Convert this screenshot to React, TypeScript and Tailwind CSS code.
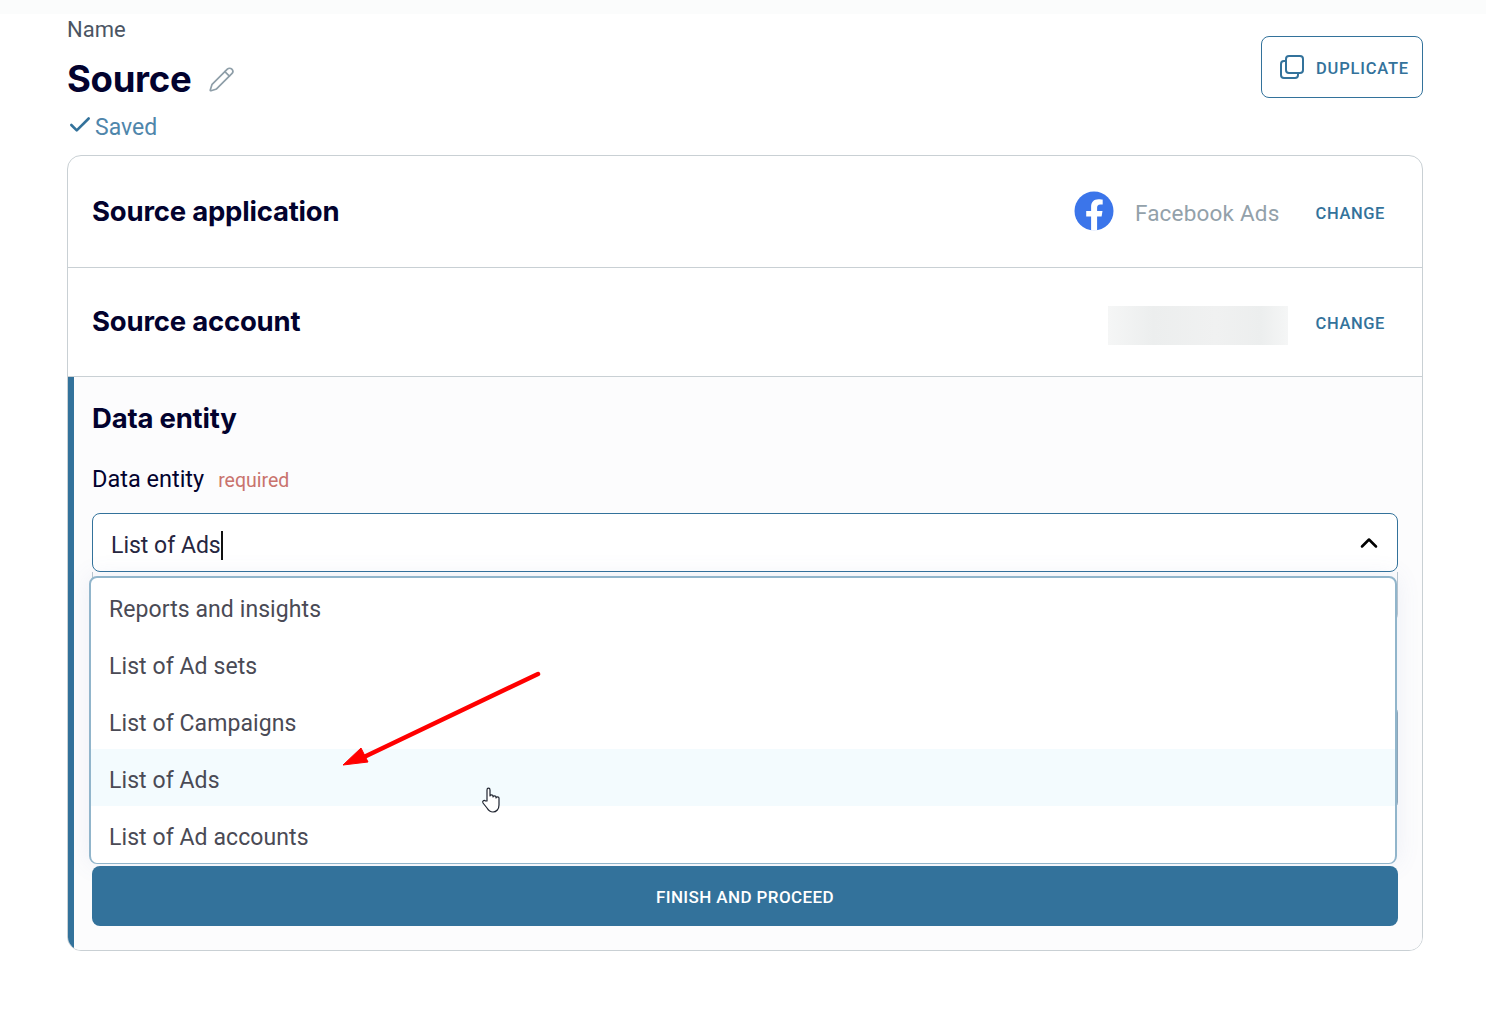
import { Check, ChevronUp, Pencil } from "lucide-react";

const options = ["Reports and insights", "List of Ad sets", "List of Campaigns", "List of Ads", "List of Ad accounts"];

function FacebookLogo() {
  return (
    <svg viewBox="0 0 40 40" className="h-[40px] w-[40px] -translate-y-[4px]">
      <circle cx="20" cy="20" r="19.5" fill="#3b75ea" />
      <path
        d="M27.6 25.600 28.500 20h-5.400v-3.600c0-1.500.8-3 3.200-3h2.400V8.700s-2.200-.4-4.300-.4c-4.400 0-7.300 2.700-7.300 7.500V20h-4.900v5.600h4.900v13.900a19.600 19.600 0 0 0 6 0V25.600z"
        fill="#fff"
      />
    </svg>
  );
}

function DuplicateIcon() {
  return (
    <svg viewBox="0 0 24 24" className="h-[24px] w-[24px]" fill="none" stroke="#33729b" strokeWidth="2" strokeLinejoin="round">
      <rect x="6" y="1" width="17" height="17" rx="3" />
      <path d="M6 6H4a3 3 0 0 0-3 3v11a3 3 0 0 0 3 3h11a3 3 0 0 0 3-3v-2" />
    </svg>
  );
}

function SourceRow({ title, rightClass, children }: { title: string; rightClass: string; children: React.ReactNode }) {
  return (
    <div className="flex items-center justify-between pl-6 pr-[37px]">
      <h2 className="font-['Inter',sans-serif] text-[27.5px] font-bold tracking-[-0.2px] text-[#02022e]">{title}</h2>
      <div className={`flex items-center ${rightClass}`}>
        {children}
        <button className="text-[16.5px] font-medium tracking-[0.6px] text-[#33729b]">CHANGE</button>
      </div>
    </div>
  );
}

export default function App() {
  return (
    <main className="relative h-[1011px] overflow-hidden bg-white font-['Roboto',sans-serif]">
      <div className="h-[14px] bg-[#fbfcfc]" />

      <div className="flex items-start justify-between pt-[3px] pr-[63px] pl-[67px]">
        <div>
          <p className="text-[22px] leading-[25px] text-[#4b5563]">Name</p>
          <div className="mt-[14px] flex items-center gap-[17px]">
            <h1 className="font-['Inter',sans-serif] text-[36.5px] leading-[46px] font-bold tracking-[-0.3px] text-[#02022e]">Source</h1>
            <Pencil className="h-[27px] w-[27px] text-[#8e9ea8]" strokeWidth={1.5} />
          </div>
          <div className="mt-[13px] flex items-center">
            <Check className="-my-[2px] h-[26px] w-[26px] -translate-y-[3px] text-[#33729b]" strokeWidth={2.4} />
            <span className="pl-[2px] text-[23px] leading-[26px] text-[#4f86ab]">Saved</span>
          </div>
        </div>
        <button className="mt-[19px] flex h-[62px] w-[162px] items-center justify-end gap-[12px] rounded-[8px] border border-[#33729b] bg-white pr-[13px]">
          <DuplicateIcon />
          <span className="pt-[4px] text-[16.5px] font-medium tracking-[0.8px] text-[#33729b]">DUPLICATE</span>
        </button>
      </div>

      <section className="mt-[14px] mr-[63px] ml-[67px] overflow-hidden rounded-[14px] border border-[#c9d0d4]">
        <div className="flex h-[112px] flex-col justify-center border-b border-[#c9d0d4]">
          <SourceRow title="Source application" rightClass="pt-[6px]">
            <FacebookLogo />
            <span className="mr-[36px] ml-[21px] pb-[2px] text-[22.5px] tracking-[0.2px] text-[#93a1aa]">Facebook Ads</span>
          </SourceRow>
        </div>

        <div className="flex h-[109px] flex-col justify-center border-b border-[#c9d0d4]">
          <SourceRow title="Source account" rightClass="pt-[4px]">
            <div className="mr-[28px] h-[39px] w-[180px] translate-y-[1px] bg-[linear-gradient(90deg,#f5f6f6,#eceeee_25%,#f0f1f1_60%,#eceeee_85%,#f5f6f6)]" />
          </SourceRow>
        </div>

        <div className="relative h-[573px] border-l-[6px] border-[#33729b] bg-[#fcfcfd] pt-[22px] pr-[24px] pl-[18px]">
          <h2 className="font-['Inter',sans-serif] text-[27.5px] leading-[38px] font-bold tracking-[-0.2px] text-[#02022e]">Data entity</h2>
          <div className="mt-[27px] flex items-baseline gap-[14px]">
            <span className="text-[23.5px] leading-[30px] text-[#02022e]">Data entity</span>
            <span className="text-[19.5px] text-[#c9736d]">required</span>
          </div>
          <div className="mt-[18px] flex h-[59px] items-center justify-between rounded-[8px] border border-[#33729b] bg-white pr-[14px] pl-[18px]">
            <span className="translate-y-[3px] border-r-2 border-[#111] text-[23px] leading-[29px] text-[#26263f]">List of Ads</span>
            <ChevronUp className="h-[28px] w-[28px] text-black" strokeWidth={2.2} />
          </div>

          {/* form fields hidden under the open list, only their edges peek out */}
          <div className="absolute top-[195px] right-[24px] left-[18px] h-[50px] rounded-b-[8px] border border-t-0 border-[#b9c6cf]" />
          <div className="absolute top-[328px] right-[24px] left-[18px] h-[105px] rounded-[8px] border border-[#8fa9bb]" />

          {/* open dropdown covers the rest of the form */}
          <div className="absolute top-[199px] right-[25px] left-[15px] rounded-[8px] border-2 border-b border-[#91b5cb] bg-white shadow-[0_0_24px_rgba(100,120,180,0.1)]">
            {options.map((o) => (
              <div
                key={o}
                className={`flex h-[57px] items-center pt-[7px] pl-[18px] text-[23px] tracking-[0.08px] text-[#4a4a55] ${o === "List of Ads" ? "bg-[#f3fbfe]" : ""}`}
              >
                {o}
              </div>
            ))}
          </div>

          <button className="absolute right-[24px] bottom-[24px] left-[18px] h-[60px] rounded-[8px] bg-[#33729b] pt-[4px] text-[17px] font-medium tracking-[0.4px] text-white">
            FINISH AND PROCEED
          </button>
        </div>
      </section>

      {/* annotation arrow */}
      <svg className="absolute top-[660px] left-[330px]" width="220" height="120" viewBox="0 0 220 120">
        <path d="M208 14 34 97" stroke="#f00" strokeWidth="4.500" strokeLinecap="round" />
        <path d="M13 105 31 88 35 96 38 102z" fill="#f00" stroke="#f00" strokeWidth="1" />
      </svg>

      {/* hand cursor */}
      <svg className="absolute top-[787px] left-[481px]" width="20" height="27" viewBox="0 0 20 27" fill="#fff" stroke="#1f2430" strokeWidth="1.2" strokeLinejoin="round">
        <path d="M6 14V3c0-2.400 3-2.400 3 0v6c0-1.500 3-1.500 3 0v1c0-1.500 3-1.500 3 0v1c0-1.500 3-1.500 3 0v7c0 4-2.500 7-6 7-3 0-4.500-1.500-6-4l-4-5c-1-1.800 1-3.300 2.500-2z" />
      </svg>
    </main>
  );
}
